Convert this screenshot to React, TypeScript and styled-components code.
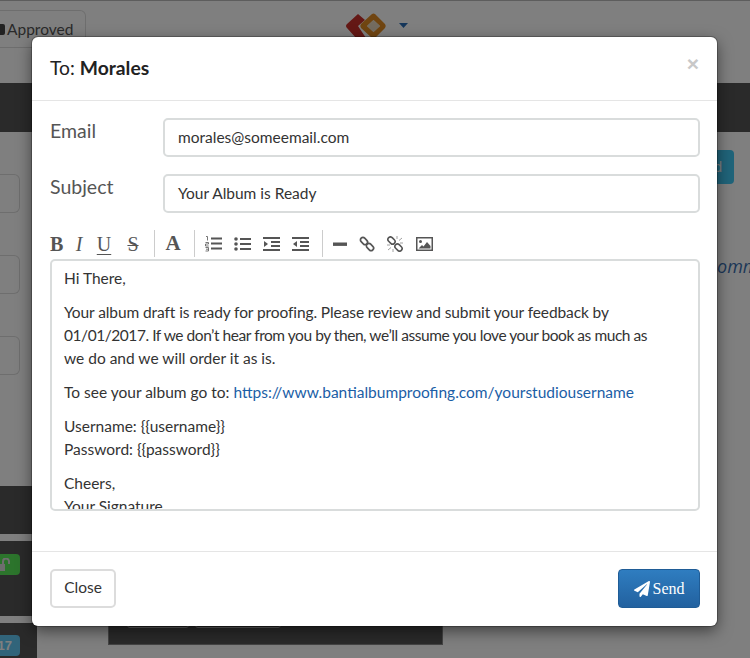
import React from "react";
import styled, { createGlobalStyle } from "styled-components";
import { FaPaperPlane } from "react-icons/fa";

const Global = createGlobalStyle`
	html, body {
		margin: 0;
		padding: 0;
	}
	body {
		font-family: "Lato", "Noto Sans", sans-serif;
		color: #333;
		overflow: hidden;
	}
	* {
		box-sizing: border-box;
	}
`;

const Page = styled.div`
	position: relative;
	width: 750px;
	height: 658px;
	overflow: hidden;
	background: #fff;
	display: flex;
	flex-direction: column;
`;

const TopBar = styled.div`
	height: 83px;
	flex-shrink: 0;
	display: flex;
	align-items: flex-start;
	border-top: 1px solid #bbb;
`;

const ApprovedTab = styled.div`
	width: 86px;
	height: 38px;
	margin-top: 9px;
	border: 1px solid #ddd;
	border-left: 0;
	border-radius: 0 6px 6px 0;
	font-size: 15.5px;
	line-height: 38px;
	color: #555;
	display: flex;
	align-items: center;
	gap: 2px;
`;

const ApprovedBox = styled.span`
	width: 5px;
	height: 11px;
	background: #444;
	border-radius: 0 2px 2px 0;
`;

const Logo = styled.svg`
	margin: 0 0 0 258px;
`;

const DarkBand = styled.div`
	height: 49px;
	flex-shrink: 0;
	background: #555;
`;

const Body = styled.div`
	flex: 1;
	display: flex;
`;

const SideColumn = styled.div`
	width: 20px;
	padding-top: 42px;
	display: flex;
	flex-direction: column;
	gap: 42px;
`;

const SideField = styled.div`
	height: 39px;
	border: 1px solid #ddd;
	border-left: 0;
	border-radius: 0 6px 6px 0;
`;

const Backdrop = styled.div`
	position: absolute;
	inset: 0;
	background: rgba(0, 0, 0, 0.5);
`;

const LeftStack = styled.div`
	position: absolute;
	left: 0;
	top: 486px;
	width: 37px;
	display: flex;
	flex-direction: column;
	gap: 7px;
`;

const LeftRow = styled.div<{ $h: number }>`
	height: ${(p) => p.$h}px;
	background: #555;
	position: relative;
`;

const LeftBadge = styled.div<{ $bg: string; $top: number }>`
	position: absolute;
	left: 0;
	top: ${(p) => p.$top}px;
	width: 20px;
	height: 21px;
	border-radius: 0 4px 4px 0;
	background: ${(p) => p.$bg};
	color: #fff;
	font-family: "Liberation Sans", sans-serif;
	font-size: 13px;
	font-weight: 700;
	line-height: 21px;
	padding-right: 8px;
	overflow: hidden;
	display: flex;
	justify-content: flex-end;
	align-items: center;
`;

const PeekButton = styled.div`
	position: absolute;
	left: 690px;
	top: 150px;
	width: 44px;
	height: 34px;
	background: #40c8f5;
	border-radius: 4px;
	color: #fff;
	font-family: "Liberation Sans", sans-serif;
	font-size: 14px;
	line-height: 34px;
	text-align: right;
	padding-right: 12px;
`;

const PeekText = styled.div`
	position: absolute;
	left: 717px;
	top: 254px;
	font-family: "Open Sans", sans-serif;
	font-style: italic;
	font-size: 18px;
	color: #3a6fb0;
`;

const BottomBlock = styled.div`
	position: absolute;
	left: 108px;
	top: 600px;
	width: 335px;
	height: 45px;
	background: #555;
	border: 1px solid #888;
`;

const BottomTab = styled.div<{ $left: number; $w: number }>`
	position: absolute;
	left: ${(p) => p.$left}px;
	top: 0;
	width: ${(p) => p.$w}px;
	height: 27px;
	border: 1px solid #bbb;
	border-radius: 0 0 3px 3px;
`;

const Modal = styled.div`
	position: absolute;
	left: 32px;
	top: 37px;
	width: 685px;
	height: 589px;
	background: #fff;
	border-radius: 6px;
	box-shadow: 0 0 0 1px rgba(0, 0, 0, 0.25), 0 5px 15px rgba(0, 0, 0, 0.5);
	display: flex;
	flex-direction: column;
`;

const Header = styled.div`
	height: 64px;
	flex-shrink: 0;
	padding: 0 18px;
	display: flex;
	align-items: center;
	justify-content: space-between;
	border-bottom: 1px solid #e5e5e5;
`;

const Title = styled.div`
	font-size: 19.3px;
	color: #222;
	line-height: 26px;
	margin-top: -2px;

	strong {
		font-weight: 700;
	}
`;

const CloseX = styled.span`
	font-family: "Liberation Sans", sans-serif;
	font-size: 21px;
	font-weight: 700;
	color: #c8c8c8;
	margin-top: -10px;
	margin-right: 0;
`;

const Form = styled.div`
	flex: 1;
	padding: 17px 17px 0 18px;
	display: flex;
	flex-direction: column;
`;

const FieldRow = styled.div`
	display: flex;
	height: 39px;
	margin-bottom: 17px;
`;

const FieldLabel = styled.label`
	width: 113px;
	font-size: 19.5px;
	line-height: 26px;
	color: #555;
`;

const Input = styled.div`
	flex: 1;
	height: 39px;
	border: 2px solid #d9dcdc;
	border-radius: 5px;
	padding: 0 13px;
	font-size: 15.5px;
	line-height: 35px;
	color: #333;
`;

const Toolbar = styled.div`
	height: 31px;
	display: flex;
	align-items: center;
	margin-top: -2px;
	color: #555;
`;

const ToolGlyph = styled.span<{ $italic?: boolean; $under?: boolean; $strike?: boolean; $w: number; $gap?: number; $size?: number }>`
	width: ${(p) => p.$w}px;
	margin-right: ${(p) => p.$gap ?? 0}px;
	font-family: "Liberation Serif", serif;
	font-size: ${(p) => p.$size ?? 20}px;
	font-weight: ${(p) => (p.$italic || p.$under || p.$strike ? 400 : 700)};
	font-style: ${(p) => (p.$italic ? "italic" : "normal")};
	text-decoration: ${(p) => (p.$under ? "underline" : p.$strike ? "line-through" : "none")};
	text-decoration-thickness: 1px;
	text-underline-offset: 3px;
	text-align: center;
	line-height: 1;
	color: #555;
`;

const ToolDivider = styled.span`
	width: 1px;
	height: 27px;
	margin: 0 10px 0 13px;
	background: #ccc;
`;

const ToolIcon = styled.svg<{ $gap?: number }>`
	display: block;
	margin-right: ${(p) => p.$gap ?? 12}px;
	flex-shrink: 0;
`;

const Editor = styled.div`
	height: 252px;
	border: 2px solid #d9dcdc;
	border-radius: 5px;
	padding: 6px 12px;
	overflow: hidden;
	font-size: 15.5px;
	line-height: 23px;
	color: #333;

	p {
		margin: 0 0 11px;
	}
	a {
		color: #1b5ea6;
		text-decoration: none;
	}
`;

// the date line runs narrower in the reference's font than in Lato
const FittedLine = styled.span<{ $spacing: number }>`
	letter-spacing: ${(p) => p.$spacing}px;
	white-space: nowrap;
`;

const Footer = styled.div`
	height: 75px;
	flex-shrink: 0;
	padding: 0 17px 1px 18px;
	display: flex;
	align-items: center;
	justify-content: space-between;
	border-top: 1px solid #e5e5e5;
`;

const CloseButton = styled.button`
	width: 66px;
	height: 39px;
	background: #fff;
	border: 2px solid #dcdcdc;
	border-radius: 5px;
	font-family: inherit;
	font-size: 15.5px;
	color: #333;
	padding: 0 0 3px;
`;

const SendButton = styled.button`
	width: 82px;
	height: 39px;
	background: linear-gradient(to bottom, #2f7dc0, #22619f);
	border: 1px solid #1f5c96;
	border-radius: 4px;
	font-family: "Liberation Serif", serif;
	font-size: 16px;
	color: #fff;
	padding: 0;
	display: flex;
	align-items: center;
	justify-content: center;
	gap: 3px;
`;

const App = () => {
	return (
		<Page>
			<Global />
			<TopBar>
				<ApprovedTab><ApprovedBox />Approved</ApprovedTab>
				<Logo width="72" height="40" viewBox="0 0 72 40">
					<path d="M14 13 L3 23 Q1 25 3 27 L12 37 L22 37 L14 25 L21 19 Z" fill="#c8312b" />
					<path d="M28 13 Q29.5 12 31 13 L41 23 Q42.5 25 41 27 L31 37 Q29.5 38 28 37 L17 27 Q15.5 25 17 23 Z M29.5 19 L23 25 L29.5 31 L36 25 Z" fill="#e08a22" fillRule="evenodd" />
					<path d="M29.5 19 L23 25 L29.5 31 L36 25 Z" fill="#e8d9c0" />
					<path d="M55 22 H64 L59.5 27 Z" fill="#2a6db5" />
				</Logo>
			</TopBar>
			<DarkBand />
			<Body>
				<SideColumn>
					<SideField />
					<SideField />
					<SideField />
				</SideColumn>
			</Body>
			<LeftStack>
				<LeftRow $h={48} />
				<LeftRow $h={75}>
					<LeftBadge $bg="#58e858" $top={13}>
						<svg width="17" height="14" viewBox="0 0 17 14" style={{ flexShrink: 0 }}>
							<path d="M0 6h10v7H0z" fill="#ddd" />
							<path d="M8 6V3.5a3 3 0 0 1 6 0V6" stroke="#ddd" strokeWidth="2" fill="none" />
						</svg>
					</LeftBadge>
				</LeftRow>
				<LeftRow $h={40}>
					<LeftBadge $bg="#62c8f5" $top={12}>17</LeftBadge>
				</LeftRow>
			</LeftStack>
			<PeekButton>d</PeekButton>
			<PeekText>omm</PeekText>
			<BottomBlock>
				<BottomTab $left={18} $w={62} />
				<BottomTab $left={86} $w={86} />
			</BottomBlock>
			<Backdrop />
			<Modal>
				<Header>
					<Title>To: <strong>Morales</strong></Title>
					<CloseX>×</CloseX>
				</Header>
				<Form>
					<FieldRow>
						<FieldLabel>Email</FieldLabel>
						<Input>morales@someemail.com</Input>
					</FieldRow>
					<FieldRow>
						<FieldLabel>Subject</FieldLabel>
						<Input>Your Album is Ready</Input>
					</FieldRow>
					<Toolbar>
						<ToolGlyph $w={13} $gap={12}>B</ToolGlyph>
						<ToolGlyph $italic $w={8} $gap={13}>I</ToolGlyph>
						<ToolGlyph $under $w={16} $gap={13}>U</ToolGlyph>
						<ToolGlyph $strike $w={16}>S</ToolGlyph>
						<ToolDivider />
						<ToolGlyph $w={16} $size={21}>A</ToolGlyph>
						<ToolDivider />
						<ToolIcon width="17" height="16" viewBox="0 0 17 16">
							<path d="M6 2.5h11M6 7.5h11M6 12.5h11" stroke="#555" strokeWidth="2.2" />
							<path d="M1 .5h1.500v4M.5 6.500h3v1.500h-3V10h3.200M.5 11.500h3V15h-3M1 13.200h2.500" stroke="#555" strokeWidth=".8" fill="none" />
						</ToolIcon>
						<ToolIcon width="17" height="16" viewBox="0 0 17 16">
							<path d="M6 3h11M6 8h11M6 13h11" stroke="#555" strokeWidth="2.2" />
							<circle cx="2" cy="3" r="1.8" fill="#555" />
							<circle cx="2" cy="8" r="1.8" fill="#555" />
							<circle cx="2" cy="13" r="1.8" fill="#555" />
						</ToolIcon>
						<ToolIcon width="17" height="16" viewBox="0 0 17 16">
							<path d="M0 2h17M8 6h9M8 10h9M0 14h17" stroke="#555" strokeWidth="2" />
							<path d="M1 5l4 3-4 3z" fill="#555" />
						</ToolIcon>
						<ToolIcon width="17" height="16" viewBox="0 0 17 16" $gap={0}>
							<path d="M0 2h17M8 6h9M8 10h9M0 14h17" stroke="#555" strokeWidth="2" />
							<path d="M5 5l-4 3 4 3z" fill="#555" />
						</ToolIcon>
						<ToolDivider />
						<ToolIcon width="14" height="16" viewBox="0 0 14 16" $gap={12}>
							<rect x="0" y="6.5" width="14" height="3.4" fill="#555" />
						</ToolIcon>
						<ToolIcon width="16" height="16" viewBox="0 0 16 16" $gap={12}>
							<rect x="1" y="2.5" width="8" height="5" rx="2.5" transform="rotate(45 5 5)" stroke="#555" strokeWidth="1.7" fill="none" />
							<rect x="7" y="8.5" width="8" height="5" rx="2.5" transform="rotate(45 11 11)" stroke="#555" strokeWidth="1.7" fill="none" />
						</ToolIcon>
						<ToolIcon width="16" height="16" viewBox="0 0 16 16" $gap={13}>
							<rect x="0.5" y="2" width="8" height="5" rx="2.5" transform="rotate(45 4.5 4.5)" stroke="#555" strokeWidth="1.6" fill="none" />
							<rect x="7.5" y="9" width="8" height="5" rx="2.5" transform="rotate(45 11.5 11.5)" stroke="#555" strokeWidth="1.6" fill="none" />
							<path d="M10 0v3M15 2l-3 2.500M16 7h-3M0 9h3M1 14l3-2.500M6 16v-3" stroke="#888" strokeWidth=".8" />
						</ToolIcon>
						<ToolIcon width="17" height="14" viewBox="0 0 17 14" $gap={0}>
							<rect x=".75" y=".75" width="15.5" height="12.5" fill="none" stroke="#555" strokeWidth="1.5" />
							<circle cx="4.5" cy="4.5" r="1.5" fill="#555" />
							<path d="M2.500 11.500 6 8l1.500 1.500L11 5l3.500 4v2.500z" fill="#555" />
						</ToolIcon>
					</Toolbar>
					<Editor>
						<p>Hi There,</p>
						<p>
							<FittedLine $spacing={-0.1}>Your album draft is ready for proofing. Please review and submit your feedback by</FittedLine><br />
							<FittedLine $spacing={-0.45}>01/01/2017. If we don’t hear from you by then, we’ll assume you love your book as much as</FittedLine><br />
							we do and we will order it as is.
						</p>
						<p>To see your album go to: <a href="#album">https://www.bantialbumproofing.com/yourstudiousername</a></p>
						<p>Username: {"{{username}}"}<br />Password: {"{{password}}"}</p>
						<p>Cheers,<br />Your Signature</p>
					</Editor>
				</Form>
				<Footer>
					<CloseButton>Close</CloseButton>
					<SendButton><FaPaperPlane size={16} /> Send</SendButton>
				</Footer>
			</Modal>
		</Page>
	);
};

export default App;
